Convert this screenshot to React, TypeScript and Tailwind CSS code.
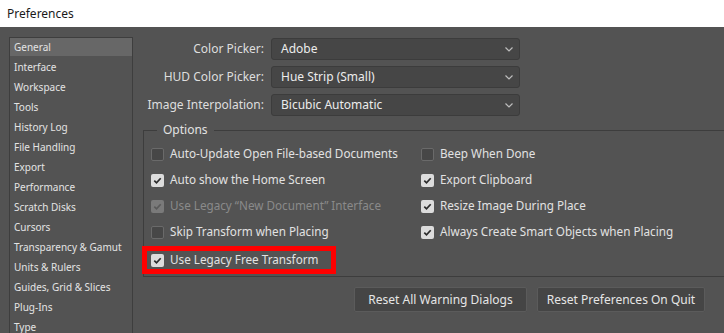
import React from "react";

const sidebarItems = [
  "General",
  "Interface",
  "Workspace",
  "Tools",
  "History Log",
  "File Handling",
  "Export",
  "Performance",
  "Scratch Disks",
  "Cursors",
  "Transparency & Gamut",
  "Units & Rulers",
  "Guides, Grid & Slices",
  "Plug-Ins",
  "Type",
];

const dropdowns = [
  { label: "Color Picker:", value: "Adobe" },
  { label: "HUD Color Picker:", value: "Hue Strip (Small)" },
  { label: "Image Interpolation:", value: "Bicubic Automatic" },
];

function Check({ checked, disabled }: { checked: boolean; disabled?: boolean }) {
  if (!checked) {
    return (
      <span className="w-[13px] h-[13px] shrink-0 rounded-[2px] bg-[#474747] border border-[#6a6a6a]" />
    );
  }
  return (
    <span
      className={
        "w-[13px] h-[13px] shrink-0 rounded-[2px] flex items-center justify-center " +
        (disabled ? "bg-[#7a7a7a]" : "bg-[#dcdcdc]")
      }
    >
      <svg width="9" height="9" viewBox="0 0 9 9">
        <path
          d="M1.3 4.6 L3.5 6.8 L7.7 2.2"
          fill="none"
          stroke={disabled ? "#5a5a5a" : "#2b2b2b"}
          strokeWidth="1.7"
        />
      </svg>
    </span>
  );
}

function Option({
  label,
  checked,
  disabled,
}: {
  label: string;
  checked: boolean;
  disabled?: boolean;
}) {
  return (
    <div className="flex items-center gap-[6px] h-[26px] whitespace-nowrap">
      <Check checked={checked} disabled={disabled} />
      <span className={disabled ? "text-[#8a8a8a]" : "text-[#e2e2e2]"}>{label}</span>
    </div>
  );
}

export default function App() {
  return (
    <div
      className="w-[724px] h-[333px] overflow-hidden bg-[#535353] flex flex-col"
      style={{ fontFamily: '"Noto Sans", "Liberation Sans", sans-serif' }}
    >
      <div className="h-[27px] shrink-0 bg-white flex items-center pl-[7px] text-[12px] text-[#1a1a1a]">
        Preferences
      </div>
      <div className="flex flex-1 min-h-0">
        <div className="pl-[9px] pt-[10px] shrink-0">
          <div className="w-[124px] h-[320px] border border-[#3e3e3e] text-[10px] text-[#e4e4e4] whitespace-nowrap">
            {sidebarItems.map((item, i) => (
              <div
                key={item}
                className={
                  "flex items-center pl-[4px] " +
                  (i === 0 ? "bg-[#676767] h-[18px] mb-[1px]" : "h-[20px]")
                }
              >
                {item}
              </div>
            ))}
          </div>
        </div>
        <div className="flex flex-col pl-[10px] pt-[11px] text-[12px] text-[#dedede]">
          <div className="flex flex-col gap-[6px]">
            {dropdowns.map((d) => (
              <div key={d.label} className="flex items-center">
                <div className="w-[128px] text-right pr-[7px] whitespace-nowrap">{d.label}</div>
                <div className="w-[249px] h-[22px] rounded-[3px] bg-[#464646] border border-[#3c3c3c] flex items-center justify-between pl-[9px] pr-[6px] text-[#ececec]">
                  <span>{d.value}</span>
                  <svg width="8" height="5" viewBox="0 0 8 5">
                    <path d="M0.5 0.5 L4 4 L7.5 0.5" fill="none" stroke="#bdbdbd" strokeWidth="1.2" />
                  </svg>
                </div>
              </div>
            ))}
          </div>
          <fieldset className="mt-[5px] w-[620px] border border-[#3d3d3d] pl-[7px] pt-[2px] pb-[3px] text-[11.7px]">
            <legend className="ml-[6px] px-[6px] text-[12px] text-[#e2e2e2]">Options</legend>
            <div className="flex">
              <div className="w-[270px] flex flex-col">
                <Option label="Auto-Update Open File-based Documents" checked={false} />
                <Option label="Auto show the Home Screen" checked />
                <Option label={"Use Legacy \u201cNew Document\u201d Interface"} checked disabled />
                <Option label="Skip Transform when Placing" checked={false} />
                <div className="relative mt-[2px]">
                  <Option label="Use Legacy Free Transform" checked />
                  <div className="absolute left-[-9px] top-[-1px] w-[194px] h-[28px] border-[5px] border-[#ff0000]" />
                </div>
              </div>
              <div className="flex flex-col">
                <Option label="Beep When Done" checked={false} />
                <Option label="Export Clipboard" checked />
                <Option label="Resize Image During Place" checked />
                <Option label="Always Create Smart Objects when Placing" checked />
              </div>
            </div>
          </fieldset>
          <div className="flex gap-[10px] pl-[211px] mt-[10px]">
            <button className="w-[173px] h-[25px] rounded-[2px] bg-[#454545] border border-[#5b5b5b] text-[#e6e6e6]">
              Reset All Warning Dialogs
            </button>
            <button className="w-[168px] h-[25px] rounded-[2px] bg-[#454545] border border-[#5b5b5b] text-[#e6e6e6]">
              Reset Preferences On Quit
            </button>
          </div>
        </div>
      </div>
    </div>
  );
}
